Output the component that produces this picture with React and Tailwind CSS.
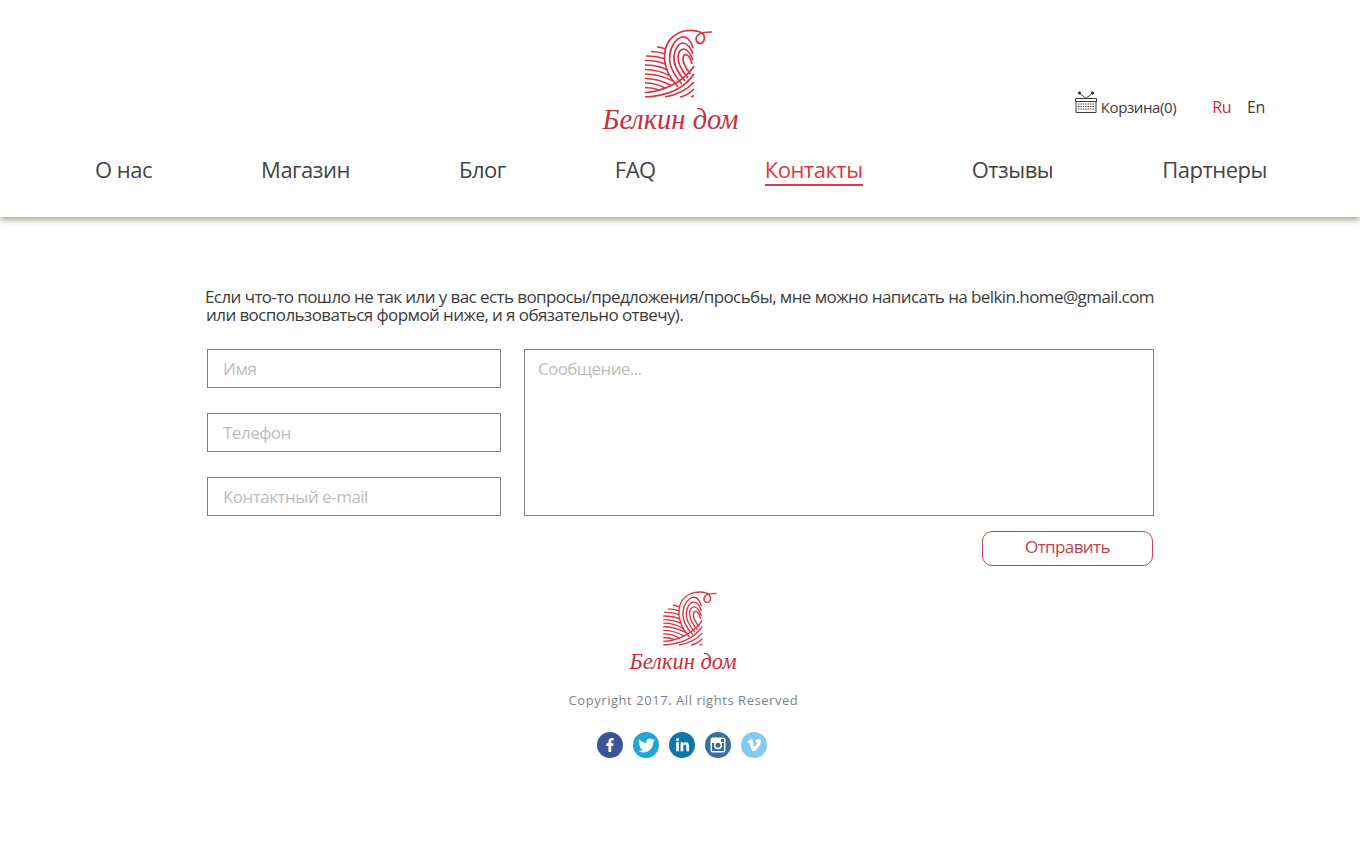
import React from 'react'
import { FaFacebookF, FaTwitter, FaLinkedinIn, FaVimeoV } from 'react-icons/fa'

const nav = ['О нас', 'Магазин', 'Блог', 'FAQ', 'Контакты', 'Отзывы', 'Партнеры']

function Insta({ className }) {
  return (
    <svg viewBox="0 0 16 16" className={className}>
      <rect x="0.5" y="0.5" width="15" height="15" rx="2.5" fill="#fff" />
      <rect x="2" y="6" width="12" height="8" fill="#3a6f9d" />
      <circle cx="8" cy="8.2" r="4" fill="#fff" />
      <circle cx="8" cy="8.2" r="2.5" fill="#3a6f9d" />
      <rect x="11" y="2" width="3" height="3" fill="#3a6f9d" />
    </svg>
  )
}

const socials = [
  { icon: FaFacebookF, bg: 'bg-[#3b5497]', size: 'h-[14px] w-[14px]' },
  { icon: FaTwitter, bg: 'bg-[#1fa6d5]', size: 'h-[17px] w-[17px]' },
  { icon: FaLinkedinIn, bg: 'bg-[#0f76a8]', size: 'h-[15px] w-[15px]' },
  { icon: Insta, bg: 'bg-[#3a6f9d]', size: 'h-[16px] w-[16px]' },
  { icon: FaVimeoV, bg: 'bg-[#86c9f0]', size: 'h-[16px] w-[16px]' },
]

function Ball({ className }) {
  return (
    <svg viewBox="0 0 76 78" className={className} fill="none" stroke="#d8343f" strokeWidth="1.7">
      {/* left stripes */}
      <path d="M17 23C20 23 23 24 25.5 25" />
      <path d="M11 27.5C16 27.5 21 28.5 25 30" />
      <path d="M6 32C13 32 20 33 25 35" />
      <path d="M5 36.5C13 36.5 21 38 26 40.5" />
      <path d="M5 41C13 41 22 43 27.5 46" />
      <path d="M5 45.5C13 45.5 23 48 30 52" />
      <path d="M5 50C13 50 24 52.5 33 57" />
      <path d="M5 54.5C13 54.5 23 57 31 61.5" />
      <path d="M5 59C12 59 20 61 26 64.5" />
      <path d="M5 63.5C10 63.5 15 64.5 19 66" />
      {/* concentric arcs */}
      <path d="M38 63C28 52 23 40 25 28C26 18 33 10 44 7" />
      <path d="M42 60C33 50 28 40 30 30C31 21 37 14 42 13C47 12 51 17 53 24" />
      <path d="M45 57C38 49 33 40 34 32C35 24 39 19 43 19C47 19 51 24 53 30" />
      <path d="M48 54C42 47 38 39 38 33C38 28 41 25 44 25C47 25 50 29 53 36" />
      <path d="M50.5 50C46 45 42.5 38 43 34C43.5 31 45 30 47 31C49 32 51 36 52 40" />
      {/* bottom bands */}
      <path d="M5 68.5C22 68 44 58 54 42" />
      <path d="M5 73C26 72 44 65 54 50" />
      <path d="M25 73C36 71 47 66 54 58" />
      <path d="M40 73C45 72 50 69 54 65" />
      <path d="M51 73L54 71.5" />
      {/* yarn end */}
      <path d="M44 7C49 6 55 6 60 8C65 10 66 16 62 19C57 21 54 15 58 11C61 8 66 8 72 8" />
    </svg>
  )
}

function Logo({ small }) {
  return (
    <div className={small ? 'flex flex-col items-center w-[108px]' : 'flex flex-col items-center w-[135px]'}>
      <Ball className={small ? 'h-[62px] w-[61px] translate-x-[6px]' : 'h-[78px] w-[76px] translate-x-[7px]'} />
      <span
        className={
          small
            ? 'mt-[1px] whitespace-nowrap font-["Liberation_Serif",serif] text-[22.5px] leading-[24px] italic text-[#c7303d]'
            : 'mt-[3px] whitespace-nowrap font-["Liberation_Serif",serif] text-[28.5px] leading-[30px] italic text-[#c7303d]'
        }
      >
        Белкин дом
      </span>
    </div>
  )
}

function Basket() {
  return (
    <svg viewBox="0 0 22 24" className="mt-[1px] h-6 w-[22px]" fill="none" stroke="#3c3c3c" strokeWidth="1">
      <circle cx="4.5" cy="2" r="1.2" fill="#3c3c3c" />
      <circle cx="17.5" cy="2" r="1.2" fill="#3c3c3c" />
      <path d="M5 2.5L11 7.5L17 2.5" />
      <path d="M.5 7.5H21.5V10.5H.5Z" />
      <path d="M1 10.5V21.5H21V10.5" />
      <path d="M3 13H19M3 15.5H19M3 18H19" strokeDasharray="1.4 1" />
    </svg>
  )
}

function Field({ placeholder }) {
  return (
    <input
      placeholder={placeholder}
      className="h-[39px] w-full border border-[#808080] bg-white px-[15px] text-[17px] tracking-[-0.5px] text-[#3c3c3c] outline-none placeholder:text-[#bdbdbd]"
    />
  )
}

export default function App() {
  return (
    <div className='min-h-[852px] bg-white font-["Open_Sans",sans-serif] text-[#3c3c3c]'>
      <header className="h-[217px] bg-white shadow-[0_3px_6px_rgba(120,105,90,0.6)]">
        <div className="relative flex justify-center pt-[24px] pr-[19px]">
          <Logo />
          <div className="absolute right-[95px] top-[90px] flex items-start">
            <Basket />
            <span className="ml-[4px] mt-[6px] text-[15px] leading-[22px] tracking-[-0.4px]">Корзина(0)</span>
            <span className="ml-[36px] mt-[6px] text-[16px] leading-[22px] tracking-[-0.4px] text-[#c7303d]">Ru</span>
            <span className="ml-[16px] mt-[6px] text-[16px] leading-[22px] tracking-[-0.4px]">En</span>
          </div>
        </div>
        <nav className="mt-[19px] flex justify-between pl-[95px] pr-[93px] text-[22px] leading-[30px] tracking-[-0.5px] text-[#444444]">
          {nav.map(n => (
            <a key={n} className={n === 'Контакты' ? 'h-[32px] border-b-2 border-[#e0383f] text-[#e0383f]' : ''}>{n}</a>
          ))}
        </nav>
      </header>

      <main className="ml-[205px] w-[950px] pt-[71px]">
        <p className="whitespace-nowrap text-[17px] leading-[18px] tracking-[-0.58px]">
          Если что-то пошло не так или у вас есть вопросы/предложения/просьбы, мне можно написать на belkin.home@gmail.com
          <br />
          <span className="ml-[1px]">или воспользоваться формой ниже, и я обязательно отвечу).</span>
        </p>
        <form className="ml-[2px] mt-[25px] flex gap-[23px]">
          <div className="flex w-[294px] flex-col gap-[25px]">
            <Field placeholder="Имя" />
            <Field placeholder="Телефон" />
            <Field placeholder="Контактный e-mail" />
          </div>
          <div className="w-[630px]">
            <textarea
              placeholder="Сообщение..."
              className="block h-[167px] w-full resize-none border border-[#808080] bg-white px-[13px] py-[6px] text-[17px] tracking-[-0.6px] outline-none placeholder:text-[#bdbdbd]"
            />
            <div className="mt-[15px] flex justify-end pr-[1px]">
              <button type="button" className="h-[35px] w-[171px] rounded-[10px] border border-[#c7404a] pb-[3px] text-[17px] leading-[26px] tracking-[-0.6px] text-[#c7404a]">
                Отправить
              </button>
            </div>
          </div>
        </form>
      </main>

      <footer className="mt-[21px] flex flex-col items-center pl-[6px]">
        <Logo small />
        <p className="ml-[1px] mt-[16px] text-[13px] leading-[20px] tracking-[0.55px] text-[#7f7f87]">Copyright 2017. All rights Reserved</p>
        <div className="ml-[-2px] mt-[22px] flex gap-[10px]">
          {socials.map((s, i) => {
            const Icon = s.icon
            return (
              <span key={i} className={'flex h-[26px] w-[26px] items-center justify-center rounded-full text-white ' + s.bg}>
                <Icon className={s.size} />
              </span>
            )
          })}
        </div>
      </footer>
    </div>
  )
}
